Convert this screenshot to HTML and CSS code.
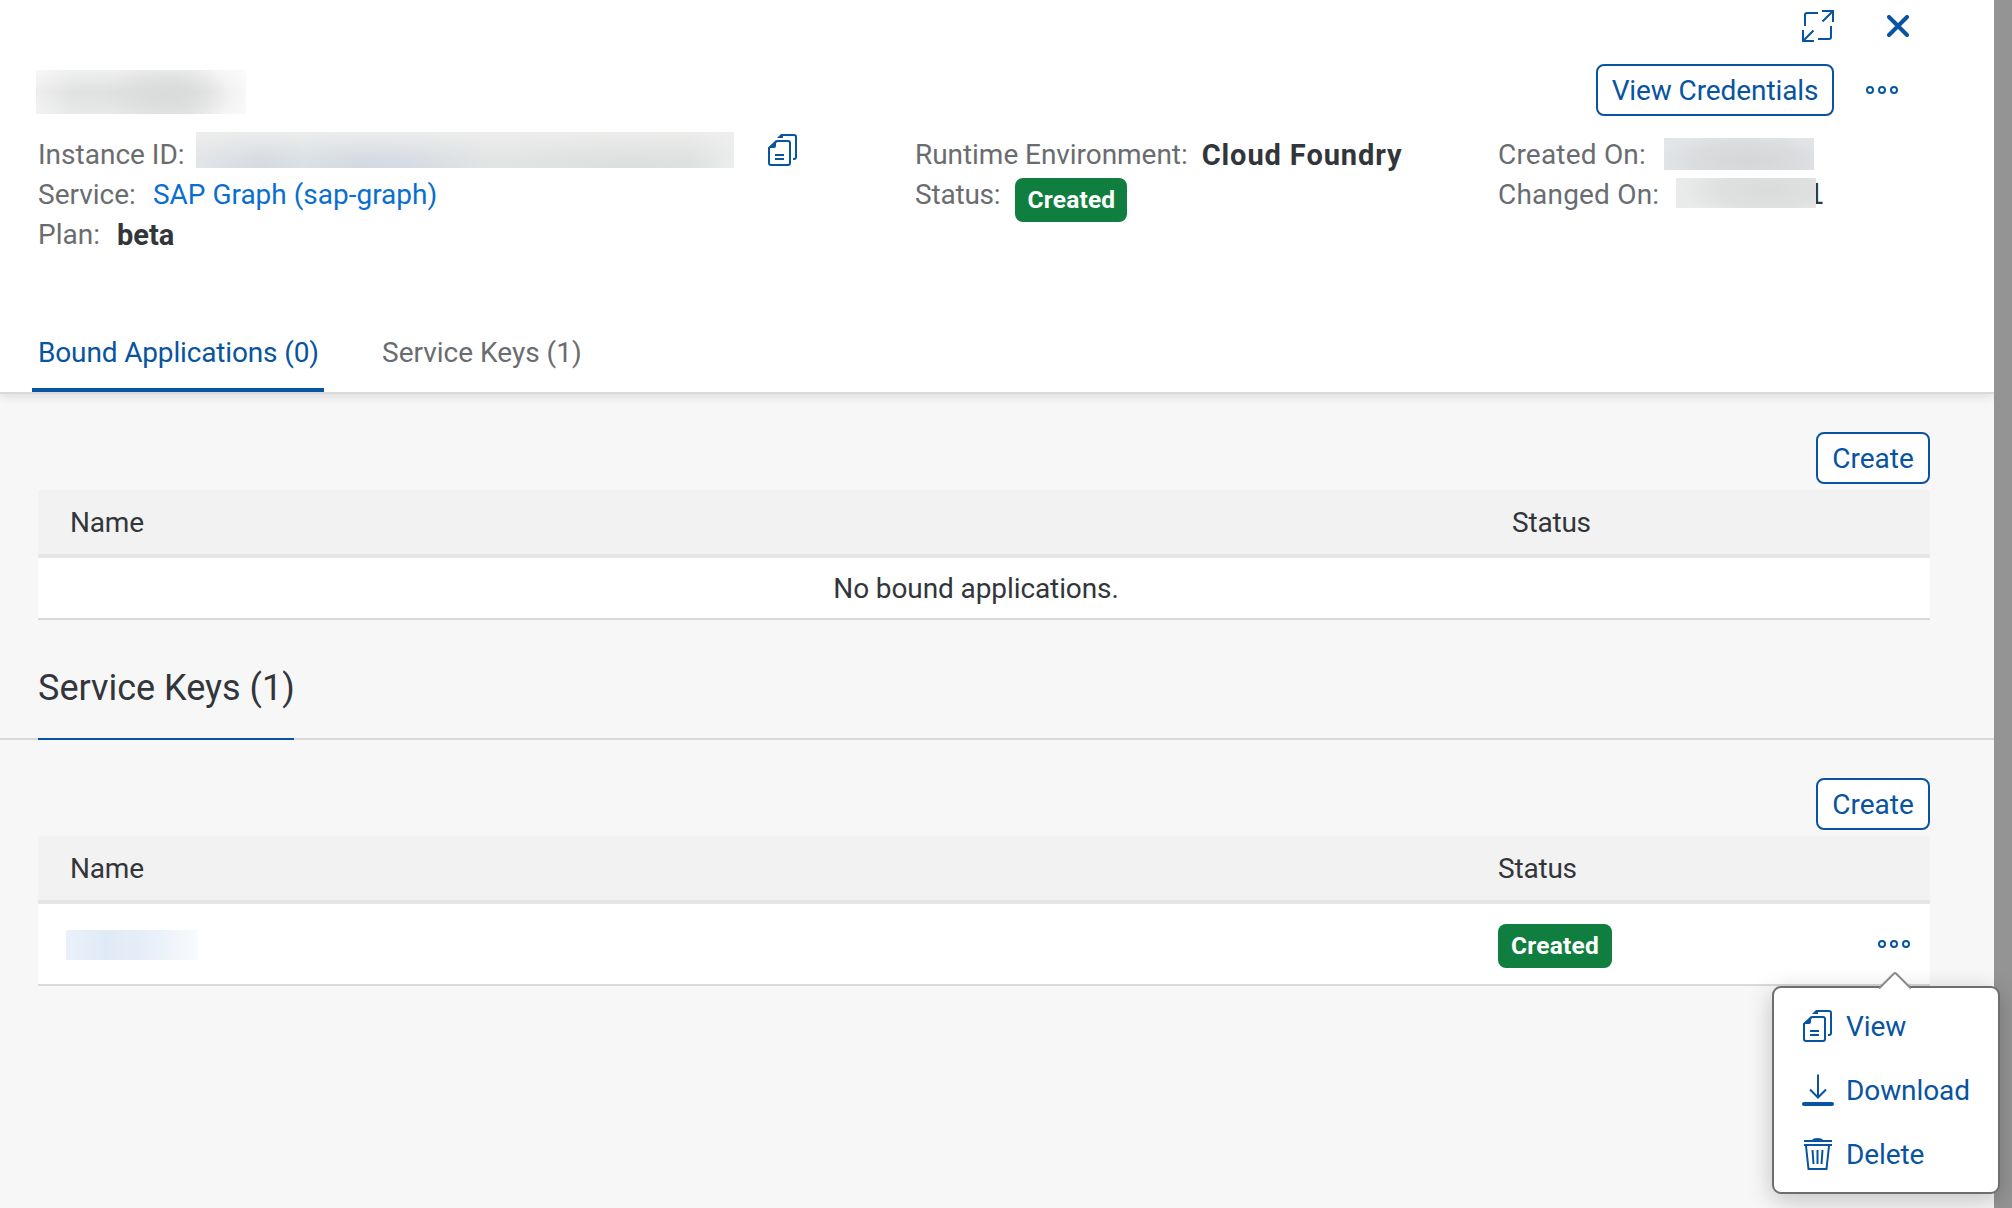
FILE: index.html
```html
<!DOCTYPE html>
<html lang="en">
<head>
<meta charset="utf-8">
<title>Service Instance</title>
<link rel="stylesheet" href="styles.css">
</head>
<body>
<svg class="sprite" aria-hidden="true">
  <symbol id="copy" viewBox="0 0 30 32">
    <path class="line" d="M9 7H20a2 2 0 0 1 2 2V29a2 2 0 0 1-2 2H3a2 2 0 0 1-2-2V14z"/>
    <path class="fill" d="M0 14 8 6V12a2 2 0 0 1-2 2z"/>
    <path class="fill" d="M9 4 13 0H15V4z"/>
    <path class="line" d="M14 1H26a2 2 0 0 1 2 2V23a2 2 0 0 1-2 2h-1M7 21H16M7 25H16"/>
  </symbol>
  <symbol id="dots" viewBox="0 0 32 8">
    <circle class="line" cx="4" cy="4" r="3"/><circle class="line" cx="16" cy="4" r="3"/><circle class="line" cx="28" cy="4" r="3"/>
  </symbol>
</svg>
<main class="panel">
  <header class="head">
    <div class="window-actions">
      <svg class="i-expand" viewBox="0 0 32 32"><path class="line" d="M3 16V5a2 2 0 0 1 2-2H16M16 29H27a2 2 0 0 0 2-2V16M20 1H31V12M30.500 1.500 20.500 11.500M1 20V31H12M1.500 30.500 11.500 20.500"/></svg>
      <svg class="i-close" viewBox="0 0 22 22"><path d="M2 2 20 20M20 2 2 20"/></svg>
    </div>
    <div class="title-row">
      <span class="mask mask-title"></span>
      <button class="btn btn-cred">View Credentials</button>
      <svg class="i-dots"><use href="#dots"/></svg>
    </div>
    <div class="facts">
      <div class="col col-a">
        <div class="fact"><span class="label label-id">Instance ID:</span><span class="mask mask-id"></span><svg class="i-copy"><use href="#copy"/></svg></div>
        <div class="fact"><span class="label">Service:</span><a class="link">SAP Graph (sap-graph)</a></div>
        <div class="fact"><span class="label">Plan:</span><b class="plan">beta</b></div>
      </div>
      <div class="col col-b">
        <div class="fact"><span class="label label-env">Runtime Environment:</span><b class="env">Cloud Foundry</b></div>
        <div class="fact"><span class="label label-status">Status:</span><span class="badge badge-head">Created</span></div>
      </div>
      <div class="col col-c">
        <div class="fact"><span class="label label-date">Created On:</span><span class="mask mask-created"></span></div>
        <div class="fact"><span class="label label-date">Changed On:</span><span class="mask mask-changed"></span><span class="digit">1</span></div>
      </div>
    </div>
    <nav class="tabs">
      <a class="tab active">Bound Applications (0)</a>
      <a class="tab">Service Keys (1)</a>
    </nav>
  </header>

  <section class="block">
    <div class="toolbar"><button class="btn">Create</button></div>
    <div class="thead"><span class="th-name">Name</span><span>Status</span></div>
    <div class="empty">No bound applications.</div>
  </section>

  <h2 class="section-title"><span>Service Keys (1)</span></h2>

  <section class="block keys">
    <div class="toolbar"><button class="btn">Create</button></div>
    <div class="thead"><span class="th-name">Name</span><span>Status</span></div>
    <div class="row">
      <span class="mask mask-key"></span>
      <span class="badge">Created</span>
      <svg class="i-dots"><use href="#dots"/></svg>
    </div>
  </section>
</main>

<div class="menu">
  <svg class="arrow" viewBox="0 0 32 18"><path class="arrow-fill" d="M0 18V16L16 1 32 16V18z"/><path class="arrow-line" d="M0 16.500 15 1.500Q16 .5 17 1.500L32 16.500"/></svg>
  <a class="item"><svg class="i-copy"><use href="#copy"/></svg><span>View</span></a>
  <a class="item"><svg class="i-down" viewBox="0 0 32 32"><path class="thin" d="M16 .500V23M8 15.500 16 23.500 24 15.500"/><path class="bar" d="M2 30H30"/></svg><span>Download</span></a>
  <a class="item"><svg class="i-trash" viewBox="0 0 30 32"><path class="fill" d="M9 2Q10 0 14.500 0T20 2H29V4H1V2zM1 6H29V8H1z"/><path class="line" d="M3 8 5.500 31H23.500L26 8M9.500 12 10.500 26M14.500 12V26M19.500 12 18.500 26"/></svg><span>Delete</span></a>
</div>
</body>
</html>
```
FILE: styles.css
```css
* { box-sizing: border-box; }
body {
  margin: 0;
  width: 2012px;
  height: 1208px;
  overflow: hidden;
  position: relative;
  background: #949494;
  font: 28px/42px Roboto, "Open Sans", sans-serif;
  color: #32363a;
  white-space: nowrap;
}
svg { display: block; flex: none; }
.sprite { position: absolute; width: 0; height: 0; }
.line { fill: none; stroke: #0854a0; stroke-width: 2; }
.fill { fill: #0854a0; }
.panel { width: 1994px; height: 1208px; background: #f7f7f7; }
.head {
  height: 394px;
  background: #fff;
  border-bottom: 2px solid #d9d9d9;
  box-shadow: 0 2px 10px rgba(0, 0, 0, .12);
  clip-path: inset(0 0 -16px 0);
}
.window-actions {
  display: flex;
  justify-content: flex-end;
  align-items: center;
  gap: 53px;
  height: 54px;
  padding: 0 85px 2px 0;
}
.i-expand { width: 32px; height: 32px; }
.i-close { width: 22px; height: 22px; }
.i-close path { fill: none; stroke: #0854a0; stroke-width: 4; stroke-linecap: round; }
.title-row {
  display: flex;
  align-items: center;
  height: 72px;
  padding: 0 96px 0 36px;
}
.btn {
  height: 52px;
  width: 114px;
  padding: 0;
  border: 2px solid #0854a0;
  border-radius: 8px;
  background: #fff;
  color: #0854a0;
  font: inherit;
  line-height: 49px;
  text-align: center;
}
.btn-cred { width: 238px; margin: 0 32px 0 auto; line-height: 50px; letter-spacing: -.1px; }
.i-dots { width: 32px; height: 8px; }
.i-copy { width: 30px; height: 32px; }
.mask { display: block; flex: none; }
.mask-title {
  width: 210px;
  height: 44px;
  margin-top: 4px;
  background:
    radial-gradient(ellipse 30% 80% at 62% 55%, #d9dbda, rgba(222, 223, 223, 0)),
    linear-gradient(180deg, rgba(255, 255, 255, .5), transparent 50%, rgba(255, 255, 255, .25)),
    linear-gradient(90deg, #eee, #e0e1e1 18%, #dedfdf 72%, #f4f4f4 95%, #f8f8f8);
}
.facts { display: flex; padding: 8px 0 0 38px; height: 188px; }
.col-a { width: 877px; }
.col-b { width: 583px; }
.fact { display: flex; height: 40px; }
.label { flex: none; margin-right: 17px; color: #6a6d70; }
.label-id { margin-right: 11.4px; }
.label-env { margin-right: 14px; letter-spacing: -.05px; }
.label-status { letter-spacing: -.2px; }
.label-date { letter-spacing: .2px; }
.link { color: #0a6ed1; }
.plan { font-size: 29px; }
.env { font-size: 29px; letter-spacing: .9px; }
.mask-id {
  width: 538px;
  height: 36px;
  margin-top: -2px;
  background:
    linear-gradient(180deg, rgba(238, 238, 237, .9), rgba(230, 231, 231, .2) 70%, transparent),
    linear-gradient(90deg, #e2e5e9, #d5dae1 12%, #dae0e5 20%, #d4d9e1 30%, #d5dae4 38%, #dbdfe3 46%, #e3e4e4 55%, #dddfde 80%, #dfe0e0 92%, #eceeef);
}
.col-a .i-copy { margin-left: 34px; }
.mask-created {
  width: 150px;
  height: 32px;
  margin: 4px 0 0 1px;
  background: radial-gradient(ellipse 60% 90% at 55% 70%, #d5d6d7, #dadcde 60%, #e3e6e9);
}
.mask-changed {
  position: relative;
  z-index: 1;
  width: 140px;
  height: 30px;
  margin-top: 4px;
  background: radial-gradient(ellipse 60% 100% at 65% 40%, #dadbdb, #dfe0e0 60%, #e9eaea);
}
.digit { margin-left: -9px; font-family: "DejaVu Sans", sans-serif; }
.badge {
  display: block;
  flex: none;
  width: 114px;
  height: 44px;
  border-radius: 8px;
  background: #107e3e;
  color: #fff;
  font-size: 24.500px;
  font-weight: 700;
  line-height: 44px;
  letter-spacing: .2px;
  text-align: center;
}
.badge-head { width: 112px; margin: 4px 0 0 -2px; }
.tabs { display: flex; gap: 52px; padding-left: 32px; height: 78px; }
.tab { height: 78px; padding: 18px 6px 0; color: #6a6d70; line-height: 41px; }
.tab.active {
  width: 292px;
  color: #0854a0;
  letter-spacing: -.15px;
  border-bottom: 4px solid #0854a0;
  border-radius: 4px 4px 0 0;
}
.block { padding: 38px 64px 0 38px; }
.toolbar { display: flex; justify-content: flex-end; height: 58px; }
.thead {
  display: flex;
  height: 68px;
  padding-left: 32px;
  line-height: 66px;
  letter-spacing: -.2px;
  background: #f2f2f2;
  border-bottom: 4px solid #e5e5e5;
}
.th-name { flex: none; width: 1442px; }
.keys .th-name { width: 1428px; }
.empty {
  height: 62px;
  padding-right: 16px;
  line-height: 61px;
  letter-spacing: -.1px;
  text-align: center;
  background: #fff;
  border-bottom: 2px solid #d9d9d9;
}
.section-title {
  margin: 0;
  height: 120px;
  padding: 46px 0 0 38px;
  border-bottom: 2px solid #d9d9d9;
  font-size: 36px;
  font-weight: 400;
  line-height: 44px;
}
.section-title span { display: block; width: 256px; height: 74px; border-bottom: 2px solid #0854a0; }
.row {
  display: flex;
  align-items: center;
  height: 82px;
  padding: 0 20px 0 28px;
  background: #fff;
  border-bottom: 2px solid #d9d9d9;
}
.mask-key { width: 132px; height: 30px; margin: 2px 1300px 0 0; background: linear-gradient(90deg, #ebf1fa, #e0eaf6 30%, #e6eef8 60%, #f9fbfd); }
.row .badge { margin-top: 4px; }
.row .i-dots { margin-left: auto; }
.menu {
  position: absolute;
  left: 1772px;
  top: 986px;
  width: 228px;
  height: 208px;
  padding: 6px 0 0 28px;
  border: 2px solid #6e6e6e;
  border-radius: 9px;
  background: #fff;
  box-shadow: 0 6px 24px rgba(0, 0, 0, .22);
  color: #0854a0;
}
.arrow { position: absolute; left: 105px; top: -16px; width: 32px; height: 18px; }
.arrow-fill { fill: #fff; }
.arrow-line { fill: none; stroke: #888; stroke-width: 2; }
.item { display: flex; align-items: center; height: 64px; gap: 12px; }
.item span { padding-top: 2px; letter-spacing: -.1px; }
.item .i-copy, .i-trash { margin: 0 1px; }
.i-down { width: 32px; height: 32px; }
.i-trash { width: 30px; height: 32px; }
.thin { fill: none; stroke: #0854a0; stroke-width: 2; }
.bar { stroke: #0854a0; stroke-width: 4; stroke-linecap: round; }
```
